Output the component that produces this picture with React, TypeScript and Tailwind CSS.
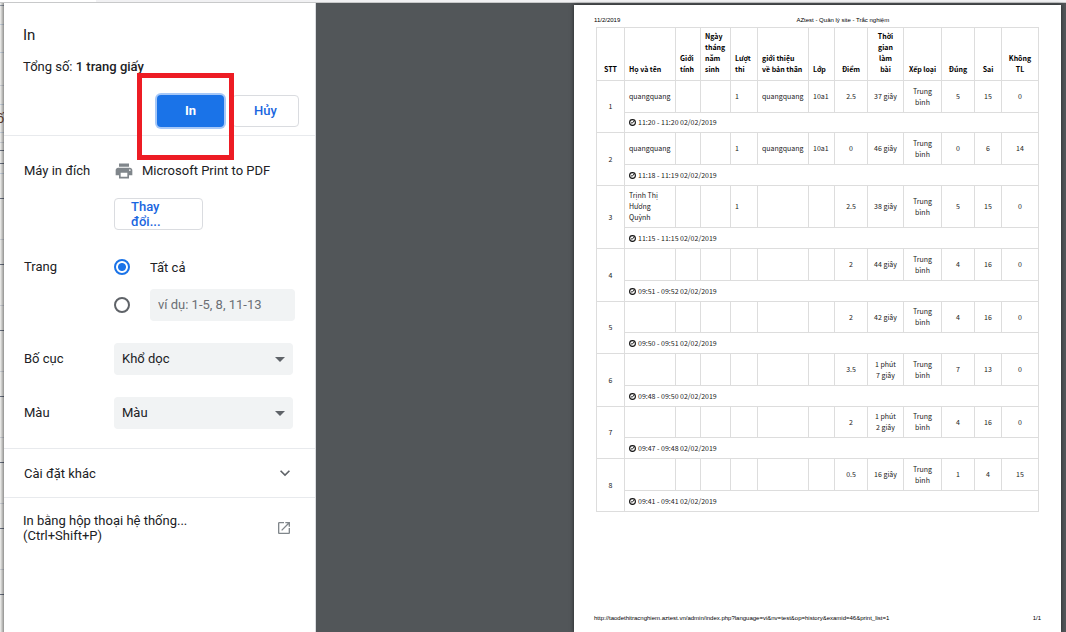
import React from "react";

type Attempt = {
  id: number;
  name?: string;
  turn?: string;
  about?: string;
  grade?: string;
  score: string;
  duration: string;
  right: string;
  wrong: string;
  blank: string;
  time: string;
  rowHeight: string;
  timeHeight: string;
};

const attempts: Attempt[] = [
  { id: 1, name: "quangquang", turn: "1", about: "quangquang", grade: "10a1", score: "2.5", duration: "37 giây", right: "5", wrong: "15", blank: "0", time: "11:20 - 11:20 02/02/2019", rowHeight: "h-8", timeHeight: "h-5" },
  { id: 2, name: "quangquang", turn: "1", about: "quangquang", grade: "10a1", score: "0", duration: "46 giây", right: "0", wrong: "6", blank: "14", time: "11:18 - 11:19 02/02/2019", rowHeight: "h-8", timeHeight: "h-[21px]" },
  { id: 3, name: "Trịnh Thị\nHương\nQuỳnh", turn: "1", score: "2.5", duration: "38 giây", right: "5", wrong: "15", blank: "0", time: "11:15 - 11:15 02/02/2019", rowHeight: "h-[42px]", timeHeight: "h-[21px]" },
  { id: 4, score: "2", duration: "44 giây", right: "4", wrong: "16", blank: "0", time: "09:51 - 09:52 02/02/2019", rowHeight: "h-8", timeHeight: "h-[21px]" },
  { id: 5, score: "2", duration: "42 giây", right: "4", wrong: "16", blank: "0", time: "09:50 - 09:51 02/02/2019", rowHeight: "h-[31px]", timeHeight: "h-[21px]" },
  { id: 6, score: "3.5", duration: "1 phút\n7 giây", right: "7", wrong: "13", blank: "0", time: "09:48 - 09:50 02/02/2019", rowHeight: "h-8", timeHeight: "h-[21px]" },
  { id: 7, score: "2", duration: "1 phút\n2 giây", right: "4", wrong: "16", blank: "0", time: "09:47 - 09:48 02/02/2019", rowHeight: "h-[31px]", timeHeight: "h-[21px]" },
  { id: 8, score: "0.5", duration: "16 giây", right: "1", wrong: "4", blank: "15", time: "09:41 - 09:41 02/02/2019", rowHeight: "h-8", timeHeight: "h-[21px]" },
];

const columns = [
  { title: "STT", width: 28, align: "text-center" },
  { title: "Họ và tên", width: 51, align: "text-left" },
  { title: "Giới\ntính", width: 25, align: "text-left" },
  { title: "Ngày\ntháng\nnăm\nsinh", width: 30, align: "text-left" },
  { title: "Lượt\nthi", width: 27, align: "text-left" },
  { title: "giới thiệu\nvề bản thân", width: 51, align: "text-left" },
  { title: "Lớp", width: 26, align: "text-left" },
  { title: "Điểm", width: 33, align: "text-center" },
  { title: "Thời\ngian\nlàm\nbài", width: 36, align: "text-center" },
  { title: "Xếp loại", width: 38, align: "text-center" },
  { title: "Đúng", width: 33, align: "text-center" },
  { title: "Sai", width: 27, align: "text-center" },
  { title: "Không\nTL", width: 37, align: "text-center" },
];

/* Rows of the page that shows behind the dialog's left edge. */
const behind = [
  { h: "h-[3px]", line: "border-gray-400" },
  { h: "h-[19px]", line: "border-slate-300" },
  { h: "h-7", line: "border-slate-300" },
  { h: "h-[33px]", line: "border-gray-300" },
  { h: "h-[19px]", line: "border-slate-300" },
  { h: "h-7", line: "border-slate-300", text: "ố" },
  { h: "h-[10px]", line: "border-gray-300" },
  { h: "h-2", line: "border-gray-500" },
  { h: "h-[13px]", line: "border-gray-500" },
  { h: "h-[10px]", line: "border-slate-300" },
  { h: "h-[25px]", line: "border-gray-500" },
  ...Array.from({ length: 6 }, () => [
    { h: "h-[41px]", line: "border-gray-300" },
    { h: "h-[25px]", line: "border-gray-500" },
  ]).flat(),
] as { h: string; line: string; text?: string }[];

function ClockIcon() {
  return (
    <svg viewBox="0 0 14 14" className="mr-[2px] inline-block size-[7px] align-[-1px]" fill="none" stroke="#111" strokeWidth="2.2">
      <circle cx="7" cy="7" r="5.8" />
      <path d="M3.8 7.8h3.4L10 4" strokeWidth="1.8" />
    </svg>
  );
}

function PrinterIcon() {
  return (
    <svg viewBox="0 0 24 24" className="size-5 shrink-0 fill-[#80868b]">
      <path d="M19 8H5c-1.66 0-3 1.34-3 3v6h4v4h12v-4h4v-6c0-1.66-1.34-3-3-3zm-3 11H8v-5h8v5zm3-7c-.55 0-1-.45-1-1s.45-1 1-1 1 .45 1 1-.45 1-1 1zm-1-9H6v4h12V3z" />
    </svg>
  );
}

function SelectRow({ id, label, options }: { id: string; label: string; options: string[] }) {
  return (
    <div className="grid grid-cols-[90px_minmax(0,1fr)] items-center">
      <label htmlFor={id} className="pb-[2px]">{label}</label>
      <div className="relative mr-[2px]">
        <select id={id} className="h-8 w-full appearance-none rounded bg-[#f1f3f4] px-2 pb-[2px] text-[13px] outline-none">
          {options.map((o) => (
            <option key={o}>{o}</option>
          ))}
        </select>
        <svg viewBox="0 0 10 5" className="pointer-events-none absolute top-[14px] right-2 h-[5px] w-[10px] fill-[#5f6368]">
          <path d="M0 0h10L5 5z" />
        </svg>
      </div>
    </div>
  );
}

const radioClass =
  "size-4 shrink-0 appearance-none rounded-full border-2 border-[#5f6368] bg-white checked:border-[#1a73e8] checked:bg-[radial-gradient(circle,#1a73e8_0_3.5px,#fff_4.5px)]";

function Sidebar() {
  return (
    <aside className="relative flex w-[312px] shrink-0 flex-col border-r border-[#dadce0] bg-white text-[13px] leading-[15px] text-[#202124]">
      <header className="border-b border-[#e8eaed] pt-[22px] pr-4 pb-2 pl-[19px]">
        <h1 className="text-[15px] leading-5">In</h1>
        <p className="mt-3 leading-5">
          Tổng số: <span className="font-medium">1 trang giấy</span>
        </p>
        <div className="mt-[18px] flex justify-end gap-2">
          <button className="h-8 w-[67px] rounded bg-[#1a73e8] pb-[2px] font-bold text-white ring-2 ring-[#a6c8f8]">In</button>
          <button className="h-8 w-[67px] rounded border border-[#dadce0] pb-[2px] font-medium text-[#1a66e0]">Hủy</button>
        </div>
      </header>

      <div className="pointer-events-none absolute top-[70px] left-[133px] h-[87px] w-[97px] border-5 border-[#ed1c24]" />

      <section className="flex flex-col gap-[22px] border-b border-[#e8eaed] pt-[25px] pr-5 pb-[19px] pl-5">
        <div className="grid grid-cols-[90px_minmax(0,1fr)]">
          <span className="leading-5">Máy in đích</span>
          <div>
            <div className="flex items-center gap-2 leading-5">
              <PrinterIcon />
              Microsoft Print to PDF
            </div>
            <button className="mt-[17px] h-8 w-[89px] rounded border border-[#dadce0] pr-6 pb-[2px] pl-4 text-left font-medium text-[#1a66e0]">
              Thay đổi...
            </button>
          </div>
        </div>

        <div role="radiogroup" aria-labelledby="pages-label" className="grid grid-cols-[90px_minmax(0,1fr)] pt-1">
          <span id="pages-label" className="leading-[22px]">Trang</span>
          <div>
            <label className="flex h-[22px] items-center gap-5">
              <input type="radio" name="pages" defaultChecked className={radioClass} />
              Tất cả
            </label>
            <div className="mt-[11px] flex items-center gap-5">
              <input type="radio" name="pages" aria-label="Trang tùy chỉnh" className={radioClass} />
              <input
                type="text"
                aria-label="Các trang"
                placeholder="ví dụ: 1-5, 8, 11-13"
                className="h-8 w-0 min-w-0 flex-1 rounded bg-[#f1f3f4] px-2 pb-[1px] text-[13px] outline-none placeholder:text-[#6b6f74]"
              />
            </div>
          </div>
        </div>

        <SelectRow id="layout" label="Bố cục" options={["Khổ dọc", "Khổ ngang"]} />
        <SelectRow id="color" label="Màu" options={["Màu", "Đen trắng"]} />
      </section>

      <button className="flex h-12 items-center justify-between pr-5 pl-5 text-left">
        Cài đặt khác
        <svg viewBox="0 0 24 24" className="size-5 fill-[#5f6368]">
          <path d="M7.41 8.59 12 13.17l4.59-4.58L18 10l-6 6-6-6z" />
        </svg>
      </button>
      <a href="#system" className="flex items-center justify-between border-t border-[#e8eaed] pt-[15px] pr-[23px] pl-[19px]">
        <span>
          In bằng hộp thoại hệ thống...
          <br />
          (Ctrl+Shift+P)
        </span>
        <svg viewBox="0 0 24 24" className="size-4 fill-[#80868b]">
          <path d="M19 19H5V5h7V3H5c-1.11 0-2 .9-2 2v14c0 1.1.89 2 2 2h14c1.1 0 2-.9 2-2v-7h-2v7zM14 3v2h3.59l-9.83 9.83 1.41 1.41L19 6.41V10h2V3h-7z" />
        </svg>
      </a>
    </aside>
  );
}

function ResultTable() {
  const left = "border border-[#ddd] px-1 py-0 text-left whitespace-pre";
  const mid = "border border-[#ddd] p-0 text-center whitespace-pre";
  return (
    <table className="w-full table-fixed border-collapse font-['Noto_Sans_CJK_SC','Noto_Sans',sans-serif] text-[7px] leading-[11px] text-[#222]">
      <colgroup>
        {columns.map((c) => (
          <col key={c.title} style={{ width: c.width }} />
        ))}
      </colgroup>
      <thead>
        <tr className="h-[53px]">
          {columns.map((c) => (
            <th key={c.title} className={`border border-[#ddd] pt-[3px] pb-[5px] align-bottom font-bold whitespace-pre text-black ${c.align === "text-left" ? "px-1 text-left" : "px-0 text-center"}`}>
              {c.title}
            </th>
          ))}
        </tr>
      </thead>
      <tbody>
        {attempts.map((a) => (
          <React.Fragment key={a.id}>
            <tr className={a.rowHeight}>
              <td rowSpan={2} className={mid}>{a.id}</td>
              <td className={left}>{a.name}</td>
              <td className={left} />
              <td className={left} />
              <td className={left}>{a.turn}</td>
              <td className={left}>{a.about}</td>
              <td className={left}>{a.grade}</td>
              <td className={mid}>{a.score}</td>
              <td className={mid}>{a.duration}</td>
              <td className={mid}>{"Trung\nbình"}</td>
              <td className={mid}>{a.right}</td>
              <td className={mid}>{a.wrong}</td>
              <td className={mid}>{a.blank}</td>
            </tr>
            <tr className={a.timeHeight}>
              <td colSpan={12} className={left}>
                <ClockIcon />
                {a.time}
              </td>
            </tr>
          </React.Fragment>
        ))}
      </tbody>
    </table>
  );
}

export default function App() {
  return (
    <div className="flex h-screen min-h-[600px] flex-col overflow-hidden bg-white font-[Roboto,sans-serif]">
      <div className="flex h-[3px] shrink-0 border-b border-[#c8c9ca]">
        <div className="w-24" />
        <div className="flex-1 bg-[#f1f1f3]" />
      </div>
      <div className="flex min-h-0 flex-1">
        <div className="relative w-1 shrink-0 overflow-hidden bg-[#f2f2f0]" aria-hidden="true">
          {behind.map((b, i) => (
            <div key={i} className={`flex items-center justify-end border-b text-[12px] text-[#6b3d2a] ${b.h} ${b.line}`}>
              {b.text}
            </div>
          ))}
          <div className="absolute inset-0 bg-linear-to-r from-transparent to-black/40" />
        </div>
        <Sidebar />
        <main className="flex min-w-0 flex-1 justify-end bg-[#525659] pt-[2px] pr-[5px]">
          <article className="flex w-[487px] flex-col bg-white px-[22px] pt-[10px] pb-[9px] shadow-[0_0_4px_rgba(0,0,0,0.6)]">
            <div className="-mx-[2px] mb-[2px] grid grid-cols-[4fr_auto_3fr] font-['Liberation_Sans',sans-serif] text-[6px] leading-[10px] text-black">
              <span>11/2/2019</span>
              <span>AZtest - Quản lý site - Trắc nghiệm</span>
            </div>
            <ResultTable />
            <footer className="-mx-[2px] mt-auto flex justify-between font-['Liberation_Sans',sans-serif] text-[6px] leading-[10px] text-black">
              <span>http://taodethitracnghiem.aztest.vn/admin/index.php?language=vi&amp;nv=test&amp;op=history&amp;examid=46&amp;print_list=1</span>
              <span>1/1</span>
            </footer>
          </article>
        </main>
      </div>
    </div>
  );
}
